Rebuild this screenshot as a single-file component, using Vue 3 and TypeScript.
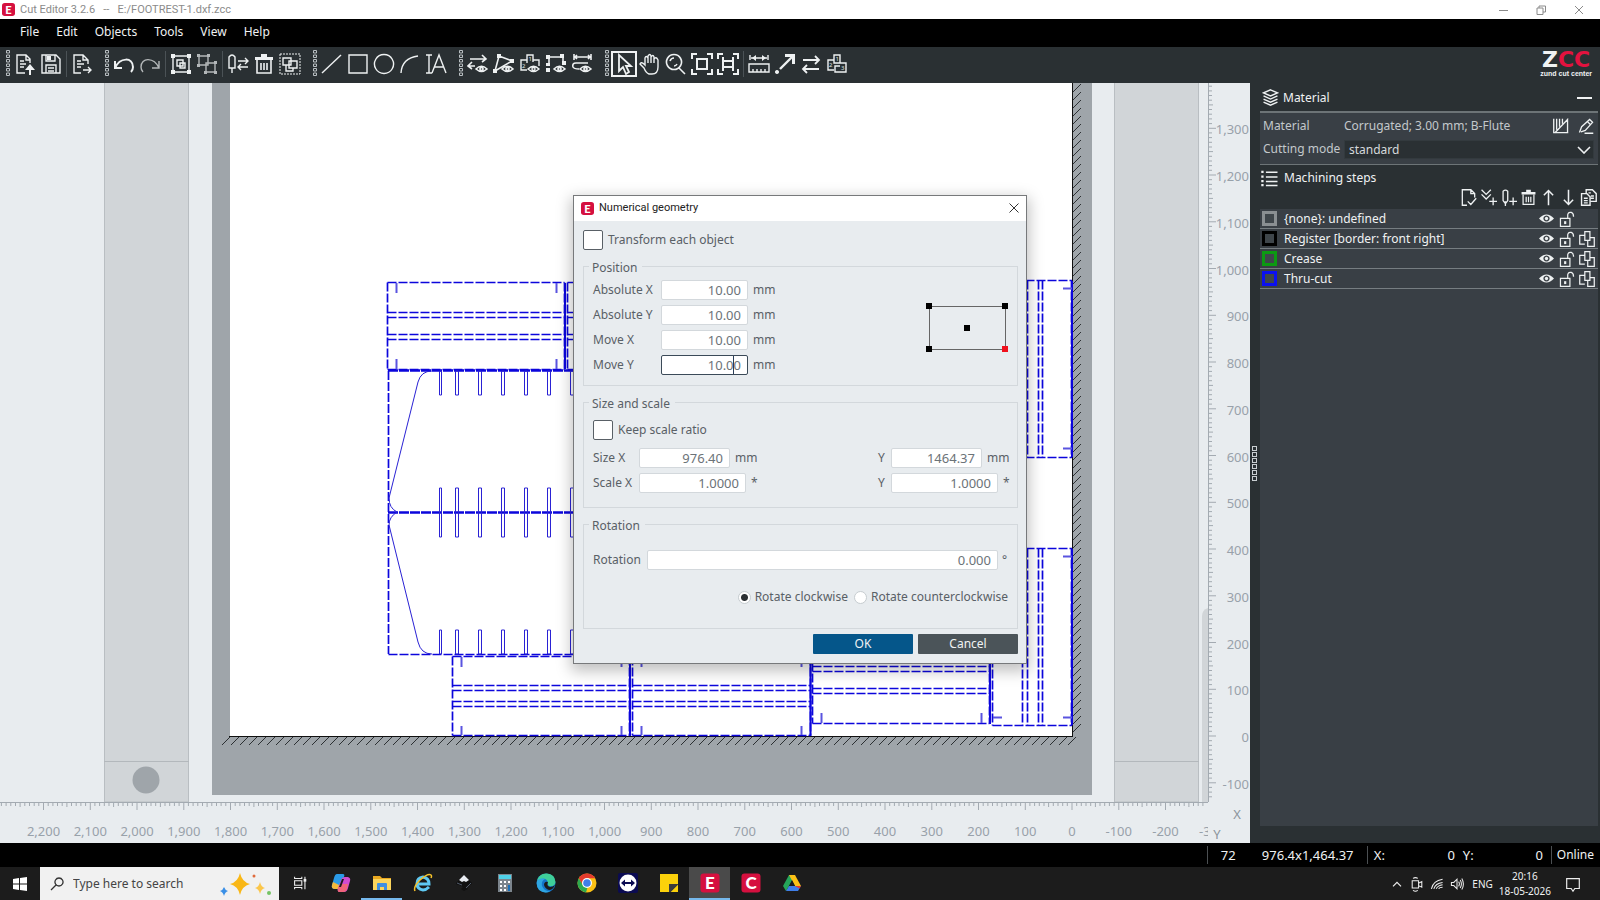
<script setup lang="ts">
import { ref } from 'vue'

interface Icon {
  s?: string
  f?: string
  w?: number
  dash?: string
  t?: [number, number, string][]
}

const eye = 'M9 16 Q14.500 10.500 20 16 Q14.500 21 9 16Z'
const eyeDot = 'M14.500 14.500a1.500 1.500 0 1 0 .01 0Z'
const boxes = 'M8 2H14V10H8Z M8 7H2V17H8M14 10H20V19H9V13H14'

const icons: Record<string, Icon> = {
  open: { s: 'M11 20H3V2H12L16 6V10 M12 2V7H16 M6 8H10 M6 11H12 M6 14H10', f: 'M16 11 L21 17H17V22H15V17H11Z' },
  save: { s: 'M2 2H16L20 6V20H2Z M6 2V8H15V2 M6 20V12H16V20 M8 15H14 M8 18H14', f: 'M7 3H11V7H7Z' },
  exportFile: { s: 'M17 11V7L12 2H3V20H10 M12 2V7H17 M6 8H10 M6 11H13 M6 14H10 M12 17H20 M17 14L20 17L17 20' },
  undo: { s: 'M2 8V15H9 M2 15C7 4 20 4 20 14C20 17 19 18 18 19', w: 2 },
  redo: { s: 'M20 8V15H13 M20 15C15 4 2 4 2 14C2 17 3 18 4 19' },
  group: { s: 'M3 3H19V19H3Z M7 7H13V13H7Z M10 10H15V15H10Z', f: 'M1 1H5V5H1Z M17 1H21V5H17Z M1 17H5V21H1Z M17 17H21V21H17Z' },
  ungroup: { s: 'M3 3H12V12H3Z M10 10H19V19H10Z', f: 'M1 1H4V4H1Z M11 1H14V4H11Z M1 11H4V14H1Z M8 18H11V21H8Z M18 18H21V21H18Z M18 8H21V11H18Z' },
  toolSwap: { s: 'M2 4Q5 0 8 4V15H2Z M5 15V20 M11 8H21 M18 5L21 8L18 11 M21 14H11 M14 11L11 14L14 17' },
  trash: { s: 'M4 7V20H18V7 M8 10V17 M11 10V17 M14 10V17', f: 'M2 4H20V7H2Z M8 1H14V4H8Z', w: 1.6 },
  duplicate: { s: 'M4 5H12V12H4Z M10 8H18V15H10Z M7 12V18H14V15', dash: 'M1 1H21V21H1Z' },
  line: { s: 'M1 20L20 2' },
  rect: { s: 'M2 2H20V20H2Z' },
  circle: { s: 'M11 1.500a9.500 9.500 0 1 0 .01 0Z' },
  arc: { s: 'M2 20Q3 5 19 3' },
  text: { s: 'M1 2H7 M4 2V20 M1 20H7 M7 20L14 2L21 20 M9.500 14H18.500' },
  swapEye: { s: 'M3 6H19 M15 2L19 6L15 9 M8 13H1 M5 9L1 13L5 16 ' + eye + eyeDot, w: 1.6 },
  shapeEye: { s: 'M2 18L6 3L19 8L2 18 ' + eye + eyeDot, f: 'M0 16H4V20H0Z M4 1H8V5H4Z M17 6H21V10H17Z', w: 1.6 },
  orderEye: { s: 'M8 10V2H14V9 M8 7H2V17H8 M14 7H20V13 ' + eye + eyeDot, t: [[9.5, 8, '1'], [3, 15, '2']] },
  pathEye: { s: 'M4 13V4H18V11 ' + eye + eyeDot, f: 'M1 2H5V6H1Z M15 1H19V5H15Z M1 15H5V19H1Z M17 8H21V12H17Z M1 10H5V13H1Z', w: 1.6 },
  measureEye: { s: 'M3 1V7 M20 1V7 M4 4H19 M6 2L4 4L6 6 M17 2L19 4L17 6 M17 10H5Q1 10 2 14Q3 16 8 16 ' + eye + eyeDot, w: 1.6 },
  cursor: { s: 'M6 2V18L10 14L13 21L16 19L13 13H18Z', w: 1.8 },
  hand: { s: 'M5 15L1 11Q2 8 6 12V5Q7 2 9 5V10V3Q11 0 12 3V10V4Q14 1 15 4V10V6Q17 3 19 7V14Q19 21 13 21H10Q7 20 5 15Z' },
  zoom: { s: 'M9 1.500a7.500 7.500 0 1 0 .01 0Z M14 15L20 21 M5 8Q6 5 9 5 M12 11Q11 13 9 13', w: 1.6 },
  fit: { s: 'M6 1H1V6 M16 1H21V6 M6 21H1V16 M16 21H21V16 M6 6H16V16H6Z', w: 2 },
  fitWidth: { s: 'M6 1H1V6 M16 1H21V6 M6 21H1V16 M16 21H21V16 M6 4V18 M16 4V18 M6 8H16 M6 14H16', w: 2 },
  ruler: { s: 'M1 11H21V19H1Z M5 19V16 M9 19V16 M13 19V16 M17 19V16 M2 2V7 M20 2V7 M3 5H19', f: 'M4 5L8 2V8Z M18 5L14 2V8Z' },
  arrowUp: { s: 'M6 16L18 4', f: 'M11 1H21V11H18V4H11Z M3 17a2 2 0 1 0 .01 0Z', w: 2.4 },
  swap: { s: 'M3 7H19 M15 3L19 7L15 11 M19 16H3 M7 12L3 16L7 20', w: 1.8 },
  order: { s: boxes, t: [[9.5, 8, '1'], [3, 14, '2'], [15, 17, '3']] },
  layers: { s: 'M11 1L20 5L11 9L2 5Z M2 9L11 13L20 9 M2 13L11 17L20 13 M2 17L11 21L20 17', w: 1.8 },
  list: { s: 'M7 3H22 M7 9H22 M7 15H22 M7 20H22', f: 'M1 1H4V4H1Z M1 7H4V10H1Z M1 13H4V16H1Z M1 18H4V21H1Z', w: 2 },
  flute: { s: 'M1 1V20H21 M5 1V16 M9 1V12 M13 1V8 M20 20V2L3 20', w: 1.8 },
  pencil: { s: 'M2 20L5 12L16 2L20 6L10 17L4 19 M13 5L17 9 M9 21H21', w: 1.8 },
  docCheck: { s: 'M9 21H3V1H14L19 6V11 M14 1V6H19 M10 16L14 20L21 12', w: 1.7 },
  chevPlus: { s: 'M2 1L8 7L14 1 M2 7L8 13L14 7 M17 11V21 M12 16H22', w: 1.7 },
  toolPlus: { s: 'M4 3Q7 0 10 3V15L7 19L4 15Z M7 16V22 M17 11V21 M12 16H22', w: 1.7 },
  up: { s: 'M11 21V2 M5 8L11 2L17 8', w: 2 },
  down: { s: 'M11 1V20 M5 14L11 20L17 14', w: 2 },
  copyDocs: { s: 'M8 6V1H16L21 6V16H14 M2 6H9L13 10V21H2Z M5 12H10 M5 15H10 M5 18H10 M11 5H14 M14 9H18 M14 12H18', w: 1.8 },
  visible: { f: 'M0 11Q11 -1 22 11Q11 23 0 11Z M11 6.500a4.500 4.500 0 1 0 .01 0Z M11 8.500a2.500 2.500 0 1 1 -.01 0Z' },
  unlocked: { s: 'M2 10H15V21H2Z M12 10V5Q13 1 17 2Q20 3 20 8', f: 'M7 14H10V18H7Z', w: 1.7 },
  linked: { s: 'M8 1H15V13H8Z M8 6H1V18H8 M15 9H21V21H12V13', w: 1.7 },
}

type Tool = { kind: 'grip' | 'sep' } | { kind: 'btn'; icon: string; title: string; on?: boolean; dim?: boolean }
const b = (icon: string, title: string, extra: { on?: boolean; dim?: boolean } = {}): Tool => ({ kind: 'btn', icon, title, ...extra })
const grip: Tool = { kind: 'grip' }
const sep: Tool = { kind: 'sep' }

const tools: Tool[] = [
  grip, b('open', 'Open'), b('save', 'Save'), sep, b('exportFile', 'Export'),
  grip, b('undo', 'Undo'), b('redo', 'Redo', { dim: true }), sep, b('group', 'Group'), b('ungroup', 'Ungroup', { dim: true }), sep,
  b('toolSwap', 'Assign tool'), b('trash', 'Delete'), b('duplicate', 'Duplicate'),
  grip, b('line', 'Line'), b('rect', 'Rectangle'), b('circle', 'Circle'), b('arc', 'Arc'), b('text', 'Text'),
  grip, b('swapEye', 'Show direction'), b('shapeEye', 'Show open shapes'), b('orderEye', 'Show order'), b('pathEye', 'Show points'), b('measureEye', 'Show overcut'),
  grip, b('cursor', 'Select', { on: true }), b('hand', 'Pan'), b('zoom', 'Zoom'), b('fit', 'Fit all'), b('fitWidth', 'Fit material'), sep,
  b('ruler', 'Measure'), b('arrowUp', 'Start point'), b('swap', 'Reverse'), b('order', 'Order'),
]

const menus = ['File', 'Edit', 'Objects', 'Tools', 'View', 'Help']
const stepTools: [string, string][] = [
  ['docCheck', 'Check'], ['chevPlus', 'Add step'], ['toolPlus', 'Add tool'], ['trash', 'Delete step'],
  ['up', 'Move up'], ['down', 'Move down'], ['copyDocs', 'Copy steps'],
]
const steps = [
  { name: '{none}: undefined', tone: 'gray', linked: false },
  { name: 'Register [border: front right]', tone: 'black', linked: true },
  { name: 'Crease', tone: 'green', linked: true },
  { name: 'Thru-cut', tone: 'blue', linked: true },
]

// Workspace geometry
const originX = 1072
const originY = 736
const per100 = 46.75
const fmt = (n: number) => n.toLocaleString('en-US')
const range = (from: number, to: number) => Array.from({ length: to - from + 1 }, (_, i) => from + i)

const xLabels = range(-3, 22).map(i => ({ x: originX - i * per100, text: fmt(i * 100) }))
const yLabels = range(-1, 13).map(i => ({ y: originY - i * per100, text: fmt(i * 100) }))
const tick = (i: number) => (i % 10 === 0 ? 8 : i % 5 === 0 ? 5 : 4)
const xTicks = range(-28, 229).map(i => `M${(originX - i * per100 / 10).toFixed(1)} 802v${tick(i)}`).join('')
const yTicks = range(-13, 139).map(i => `M1208 ${(originY - i * per100 / 10).toFixed(1)}h${tick(i)}`).join('')
const hatchX = range(0, 94).map(i => `M${222 + i * 9} 745l8 -8`).join('')
const hatchY = range(0, 80).map(i => `M1073 ${92 + i * 8}l8 -8`).join('')

const slotXs = [455, 478, 501, 524, 547, 570]
const slots = [[371, 24], [488, 49], [630, 24]]
  .map(([y, h]) => `M439.500 ${y}h2v${h}h-2Z` + slotXs.map(x => `M${x + 0.5} ${y}h3v${h}h-3Z`).join('')).join('')

const panel = (x: number, y: number, w: number, h: number, rows: number[]) =>
  `M${x} ${y}h${w}M${x} ${y + h}h${w}M${x} ${y}v${h}M${x + w} ${y}v${h}` + rows.map(r => `M${x} ${r}h${w}`).join('')
const cuts = [
  panel(387.5, 282.5, 177, 87, [312.5, 317.5, 334.5, 339.5]),
  panel(567.5, 282.5, 177, 87, [312.5, 317.5, 334.5, 339.5]),
  panel(452.5, 656.5, 177, 79, [685.5, 690.5, 701.5, 706.5]),
  panel(632.5, 656.5, 178, 79, [685.5, 690.5, 701.5, 706.5]),
  panel(812.5, 640.5, 177, 83, [666.5, 671.5, 688.5, 693.5]),
  'M992.500 548.500H1072M992.500 725.500H1072M992.500 548.500V725.500M1071.500 548.500V725.500M1022.500 548.500V725.500M1027.500 548.500V725.500M1038.500 548.500V725.500M1042.500 548.500V725.500',
  'M992.500 280.500H1072M992.500 457.500H1072M1071.500 280.500V457.500M1038.500 280.500V457.500M1042.500 280.500V457.500M1027.500 280.500V457.500',
  'M388.500 371V654M388.500 654.500H600',
].join('')
const notch = [
  'M396.500 283v10M556.500 283v10M396.500 359v10M556.500 359v10',
  'M461.500 657v10M621.500 657v10M641.500 657v10M461.500 726v9M621.500 726v9M641.500 726v9M801.500 726v9M801.500 657v10',
  'M821.500 713v10M981.500 713v10M993 717.500h9M1063 717.500h9M1063 556.500h9M1063 288.500h9M1063 448.500h9',
].join('')

const eachObject = ref(false)
const keepRatio = ref(false)
const direction = ref('cw')
const rotation = ref('0.000')
const position = ref([
  { id: 'absx', label: 'Absolute X', value: '10.00', focus: false },
  { id: 'absy', label: 'Absolute Y', value: '10.00', focus: false },
  { id: 'movx', label: 'Move X', value: '10.00', focus: false },
  { id: 'movy', label: 'Move Y', value: '10.00', focus: true },
])
const sizes = ref([
  { id: 'size', label: 'Size X', x: '976.40', y: '1464.37', unit: 'mm' },
  { id: 'scale', label: 'Scale X', x: '1.0000', y: '1.0000', unit: '*' },
])
const apps = ['taskview', 'copilot', 'explorer', 'ie', 'inkscape', 'calc', 'edge', 'chrome', 'teamviewer', 'notes', 'editor', 'center', 'drive']
</script>

<template>
  <div class="screen">
    <header class="titlebar">
      <svg class="mark" viewBox="0 0 14 14"><rect width="14" height="14" rx="3" fill="#d5103f" /><text x="7" y="11.500" class="mark-letter">E</text></svg>
      <span class="caption">Cut Editor 3.2.6&nbsp; &nbsp;--&nbsp; &nbsp;E:/FOOTREST-1.dxf.zcc</span>
      <div class="winbtns">
        <button aria-label="Minimize"><svg viewBox="0 0 10 10"><path d="M1 5.500H10" /></svg></button>
        <button aria-label="Restore"><svg viewBox="0 0 10 10"><path d="M1 3H7V9.500H1Z M3 3V1H9.500V7H7" /></svg></button>
        <button aria-label="Close"><svg viewBox="0 0 10 10"><path d="M1 1L9 9M9 1L1 9" /></svg></button>
      </div>
    </header>

    <nav class="menubar">
      <button v-for="m in menus" :key="m">{{ m }}</button>
    </nav>

    <div class="toolbar">
      <template v-for="(t, i) in tools" :key="i">
        <span v-if="t.kind === 'grip'" class="grip"><svg viewBox="0 0 4 28"><path d="M.5 .5h3v2.500h-3ZM.5 5h3v2.500h-3ZM.5 9.500h3v2.500h-3ZM.5 14h3v2.500h-3ZM.5 18.500h3v2.500h-3ZM.5 23h3v2.500h-3Z" /></svg></span>
        <span v-else-if="t.kind === 'sep'" class="sep"></span>
        <button v-else class="tool" :class="{ on: t.on, dim: t.dim }" :aria-label="t.title">
          <svg viewBox="0 0 22 22">
            <path v-if="icons[t.icon].dash" :d="icons[t.icon].dash" class="st dotted" />
            <path v-if="icons[t.icon].s" :d="icons[t.icon].s" class="st" :stroke-width="icons[t.icon].w ?? 1.4" />
            <path v-if="icons[t.icon].f" :d="icons[t.icon].f" class="fl" />
            <text v-for="n in icons[t.icon].t" :key="n[2]" :x="n[0]" :y="n[1]" class="num">{{ n[2] }}</text>
          </svg>
        </button>
      </template>
      <div class="zcc">
        <div class="zcc-big">Z<b>CC</b></div>
        <div class="zcc-small">zund cut center</div>
      </div>
    </div>

    <main class="work">
      <section class="canvas">
        <svg viewBox="0 83 1250 760" preserveAspectRatio="xMinYMin slice">
          <rect x="0" y="83" width="1250" height="760" fill="#e8ecef" />
          <rect x="104.500" y="80" width="84" height="722" class="band" />
          <path d="M104 761.500H189" class="bandline" />
          <circle cx="146" cy="780" r="13.500" fill="#9fa5aa" />
          <rect x="1114.500" y="80" width="84" height="722" class="band" />
          <path d="M1114 761.500H1199" class="bandline" />
          <rect x="212" y="80" width="880" height="715" fill="#9fa5aa" />
          <rect x="230" y="80" width="842" height="656" fill="#fff" />
          <path d="M229 736.500H1073M1072.500 83V737" stroke="#111" />
          <path :d="hatchX + hatchY" stroke="#2c3033" />
          <path d="M1202 802V616Q1202 610 1208 608V802Z" fill="#d1d5d8" />

          <g fill="none" stroke="#0c06dc">
            <path :d="cuts" stroke-width="1.700" stroke-dasharray="9 2" />
            <path d="M388 370.500H600M388 512.500H600" stroke-width="2.500" stroke-dasharray="10 1" />
            <path d="M565 283V369M630 657V736M810.500 657V736M990 660V724M1072 281V457M1072 549V725" stroke-width="2" />
            <path :d="notch" stroke-width="2" stroke="#5a54e0" />
            <path :d="slots" stroke="#2a22d4" />
            <path d="M432 371Q421 371 418 382L389 498Q389 508 397 512Q389 517 389 525L418 642Q421 654 432 654" stroke="#2a22d4" />
          </g>

          <path d="M0 802.500H1208M1208.500 83V802" stroke="#a3aab1" />
          <path :d="xTicks + yTicks" stroke="#a3aab1" />
          <text v-for="l in xLabels" :key="'x' + l.text" :x="l.x" y="836" class="rule mid">{{ l.text }}</text>
          <text v-for="l in yLabels" :key="'y' + l.text" x="1249" :y="l.y + 6" class="rule end">{{ l.text }}</text>
          <rect x="1208" y="803" width="42" height="40" fill="#e8ecef" />
          <text x="1237" y="819" class="rule mid axis">X</text>
          <text x="1217" y="839" class="rule mid axis">Y</text>
        </svg>
      </section>

      <div class="splitter"><i v-for="n in 6" :key="n"></i></div>

      <aside class="side">
        <div class="head">
          <svg viewBox="0 0 22 22"><path :d="icons.layers.s" class="st" stroke-width="1.800" /></svg>
          <h2>Material</h2>
          <button class="collapse" aria-label="Collapse"></button>
        </div>
        <div class="material">
          <div class="mrow">
            <span class="mlabel">Material</span><span class="mvalue">Corrugated; 3.00 mm; B-Flute</span>
            <button v-for="n in ['flute', 'pencil']" :key="n" class="mini" :aria-label="n">
              <svg viewBox="0 0 22 22"><path :d="icons[n].s" class="st" stroke-width="1.800" /></svg>
            </button>
          </div>
          <div class="mrow">
            <label class="mlabel" for="mode">Cutting mode</label>
            <div class="selwrap">
              <select id="mode"><option>standard</option></select>
              <svg viewBox="0 0 14 8"><path d="M1 1L7 7L13 1" class="st" stroke-width="1.600" /></svg>
            </div>
          </div>
        </div>
        <div class="head second">
          <svg viewBox="0 0 22 22"><path :d="icons.list.s" class="st" stroke-width="2" /><path :d="icons.list.f" class="fl" /></svg>
          <h2>Machining steps</h2>
        </div>
        <div class="steptools">
          <button v-for="s in stepTools" :key="s[0]" :aria-label="s[1]">
            <svg viewBox="0 0 22 22"><path :d="icons[s[0]].s" class="st" :stroke-width="icons[s[0]].w" /><path v-if="icons[s[0]].f" :d="icons[s[0]].f" class="fl" /></svg>
          </button>
        </div>
        <ul class="steps">
          <li v-for="s in steps" :key="s.name">
            <i class="swatch" :class="s.tone"></i>
            <span>{{ s.name }}</span>
            <button aria-label="Visible"><svg class="eye" viewBox="0 0 22 22"><path :d="icons.visible.f" fill-rule="evenodd" class="fl" /></svg></button>
            <button aria-label="Unlocked"><svg viewBox="0 0 22 22"><path :d="icons.unlocked.s" class="st" stroke-width="1.700" /><path :d="icons.unlocked.f" class="fl" /></svg></button>
            <button aria-label="Linked"><svg v-if="s.linked" viewBox="0 0 22 22"><path :d="icons.linked.s" class="st" stroke-width="1.700" /></svg></button>
          </li>
        </ul>
      </aside>
    </main>

    <footer class="status">
      <span class="c1">72</span><span class="c2">976.4x1,464.37</span>
      <span class="c3"><span>X:</span><span>0</span></span><span class="c4"><span>Y:</span><span>0</span></span>
      <span class="c5">Online</span>
    </footer>

    <div class="taskbar">
      <button class="start" aria-label="Start"><svg viewBox="0 0 14 14"><path d="M0 2L6 1V6.500H0ZM7 1L14 0V6.500H7ZM0 7.500H6V13L0 12ZM7 7.500H14V14L7 13Z" fill="#fff" /></svg></button>
      <label class="search">
        <svg class="glass" viewBox="0 0 14 14"><path d="M9 1a4 4 0 1 1-.01 0ZM6 8L1 13" /></svg>
        <input type="text" placeholder="Type here to search" aria-label="Search" />
        <svg class="sparkles" viewBox="0 0 54 24">
          <path d="M21 1Q23 10 31 12Q23 14 21 23Q19 14 11 12Q19 10 21 1Z" fill="#f9b716" />
          <path d="M41 10Q42 15 46 16Q42 17 41 22Q40 17 36 16Q40 15 41 10Z" fill="#fbc64a" />
          <path d="M5 15Q6 18 9 19Q6 20 5 24Q4 20 1 19Q4 18 5 15Z" fill="#3a8fe6" />
          <circle cx="35" cy="4" r="1.500" fill="#e06b3c" /><circle cx="50" cy="21" r="2" fill="#74c365" />
        </svg>
      </label>
      <button v-for="a in apps" :key="a" class="app" :class="a" :aria-label="a">
        <svg viewBox="0 0 20 20">
          <g v-if="a === 'taskview'" fill="none" stroke="#eee" stroke-width="1.200"><path d="M4 3V5H12V3M4 17V15H12V17M4 7.500H12V12.500H4ZM15.500 3V17" /><path d="M14 7H17" stroke-width="3" /></g>
          <g v-else-if="a === 'copilot'">
            <path d="M6 1H12Q14 1 13 4L10 13Q9 16 6 16H3Q0 15 1 12L3 5Q4 1 6 1Z" fill="#2a9be8" /><path d="M2 9L1 12Q0 16 4 16H6Q9 16 10 13Z" fill="#f5b93a" />
            <path d="M14 4H17Q20 5 19 8L17 15Q16 19 13 19H8Q6 18 7 15L10 7Q11 4 14 4Z" fill="#d14bd0" /><path d="M7 15L9 11H17L16 16Q15 19 12 19H8Q6 18 7 15Z" fill="#f0647a" /><path d="M11 6L13 6L10 14L8 14Z" fill="#1c1c1c" />
          </g>
          <g v-else-if="a === 'explorer'"><path d="M1 3H8L10 5H19V17H1Z" fill="#e9a820" /><path d="M1 6H19V17H1Z" fill="#fbd55c" /><path d="M5 17V11Q5 10 6 10H14Q15 10 15 11V17H12V14H8V17Z" fill="#3f8fe0" /></g>
          <g v-else-if="a === 'ie'" fill="none"><path d="M16 14Q13 17 10 17Q4 16 4 10.500Q4 5 10 4Q16 5 16 11H5" stroke="#5fc9f3" stroke-width="3" /><path d="M2 18Q0 14 7 7Q15 0 18 2Q19 3 18 5" stroke="#f5c22b" stroke-width="1.500" /></g>
          <g v-else-if="a === 'inkscape'"><path d="M10 2L18 10Q18 12 14 12L12 14L14 16L10 18L7 16L9 14L5 12Q2 12 2 10Z" fill="#111" /><path d="M10 2L15 7L12 9L10 8L8 9L5 7Z" fill="#e8ecf2" /><path d="M3 10L8 12M12 15L17 10" stroke="#525c6c" /></g>
          <g v-else-if="a === 'calc'"><path d="M3 1H17V19H3Z" fill="#7c858d" /><path d="M4 2H16V6H4Z" fill="#4fd1e8" /><path d="M5 8H7V10H5ZM9 8H11V10H9ZM13 8H15V10H13ZM5 12H7V14H5ZM9 12H11V14H9ZM5 16H7V18H5ZM9 16H11V18H9Z" fill="#fff" /><path d="M13 12H15V18H13Z" fill="#1a6fb8" /></g>
          <g v-else-if="a === 'edge'"><circle cx="10" cy="10" r="9.500" fill="#1475c9" /><path d="M1 8Q3 0 11 .5Q19 1 19.500 9Q19 14 13 13Q11 12 12 10Q11 5 6 6Q3 6 1 8Z" fill="#3fcf9a" /><path d="M1 8Q5 4 9 6Q5 8 6 13Q8 18 14 18.500Q8 21 3 17Q0 13 1 8Z" fill="#2fa6e2" /><path d="M12 9Q10 13 14 14Q17 14 19 12Q17 17 13 17Q8 15 8 11Q9 8 12 9Z" fill="#1c1c1c" /></g>
          <g v-else-if="a === 'chrome'"><circle cx="10" cy="10" r="9.500" fill="#fbc116" /><path d="M10 .5A9.500 9.500 0 0 1 18.300 5.300H10L5.500 12L1.700 5.300A9.500 9.500 0 0 1 10 .5Z" fill="#e33b2e" /><path d="M1.700 5.300L6 12.500L10.500 14.500L9 19.450A9.500 9.500 0 0 1 1.700 5.300Z" fill="#2da94f" /><circle cx="10" cy="10" r="5" fill="#fff" /><circle cx="10" cy="10" r="3.800" fill="#3f7ee8" /></g>
          <g v-else-if="a === 'teamviewer'"><rect width="20" height="20" rx="2" fill="#0b0b52" /><circle cx="10" cy="10" r="8.500" fill="#fff" /><path d="M3 10L7 6.500V9H13V6.500L17 10L13 13.500V11H7V13.500Z" fill="#0b0b52" /></g>
          <g v-else-if="a === 'notes'"><path d="M1 1H19V19H1Z" fill="#fbd10b" /><path d="M10 11H19V12L12 19H10Z" fill="#3b3b3b" /><path d="M12 19L19 12V19Z" fill="#fbd10b" /></g>
          <g v-else-if="a === 'editor' || a === 'center'"><rect x=".5" y=".5" width="19" height="19" rx="3" fill="#d5103f" /><text x="10" y="16" class="app-letter">{{ a === 'editor' ? 'E' : 'C' }}</text></g>
          <g v-else><path d="M7 2H13L10 8L4 18L1 13Z" fill="#25a55a" /><path d="M7 2H13L19 13H13Z" fill="#fbc116" /><path d="M4 18L7 13H19L16 18Z" fill="#3f7ee8" /><path d="M10 7L13 13H7Z" fill="#1c1c1c" /><path d="M13 13H19L17.500 15.500Z" fill="#e33b2e" /></g>
        </svg>
      </button>
      <div class="tray">
        <svg viewBox="0 0 20 20"><path d="M5 13L10 8L15 13" stroke-width="1.500" /></svg>
        <svg viewBox="0 0 20 20"><path d="M4 6H12V15H4ZM12 9L16 7V14L12 12M5 3Q8 1 11 3M5 18Q8 20 11 18" /></svg>
        <svg viewBox="0 0 20 20"><path d="M3 16Q5 6 17 4M6 16Q8 9 17 8M9 16Q11 12 17 11M12 16Q13 14 17 14" /></svg>
        <svg viewBox="0 0 20 20"><path d="M3 8H6L10 4V16L6 12H3ZM12 7Q14 10 12 13M14 5Q17 10 14 15M16 3Q20 10 16 17" /></svg>
        <span class="lang">ENG</span>
        <span class="clock"><span>20:16</span><span>18-05-2026</span></span>
        <svg class="bell" viewBox="0 0 20 20"><path d="M3 4H17V15H12L10 18L8 15H3Z" /></svg>
      </div>
    </div>

    <form class="dialog" role="dialog" aria-label="Numerical geometry" @submit.prevent>
      <div class="dtitle">
        <svg class="mark" viewBox="0 0 14 14"><rect width="14" height="14" rx="3" fill="#d5103f" /><text x="7" y="11.500" class="mark-letter">E</text></svg>
        <span>Numerical geometry</span>
        <button type="button" aria-label="Close"><svg viewBox="0 0 10 10"><path d="M.5 .5L9.500 9.500M9.500 .5L.5 9.500" /></svg></button>
      </div>
      <div class="dbody">
        <label class="check"><input v-model="eachObject" type="checkbox" />Transform each object</label>

        <fieldset class="fpos">
          <legend>Position</legend>
          <div class="posrows">
            <div class="rows">
              <div v-for="p in position" :key="p.id" class="row">
                <label :for="p.id">{{ p.label }}</label>
                <span class="field"><input :id="p.id" v-model="p.value" type="text" :class="{ focus: p.focus }" /><i v-if="p.focus" class="caret"></i></span>
                <span class="unit">mm</span>
              </div>
            </div>
            <svg class="anchor" viewBox="0 0 82 50">
              <path d="M3.500 3.500H79.500V46.500H3.500Z" fill="none" stroke="#666" />
              <path d="M0 0h6v6h-6ZM76 0h6v6h-6ZM0 43h6v6h-6ZM38 22h6v6h-6Z" fill="#000" />
              <path d="M76 43h6v6h-6Z" fill="#f0101c" />
            </svg>
          </div>
        </fieldset>

        <fieldset class="fsize">
          <legend>Size and scale</legend>
          <label class="check"><input v-model="keepRatio" type="checkbox" />Keep scale ratio</label>
          <div v-for="s in sizes" :key="s.id" class="row" :class="s.id">
            <label :for="s.id + 'x'">{{ s.label }}</label>
            <span class="cell"><input :id="s.id + 'x'" v-model="s.x" type="text" /><span class="unit">{{ s.unit }}</span></span>
            <label class="ylab" :for="s.id + 'y'">Y</label>
            <span class="cell"><input :id="s.id + 'y'" v-model="s.y" type="text" /><span class="unit">{{ s.unit }}</span></span>
          </div>
        </fieldset>

        <fieldset class="frot">
          <legend>Rotation</legend>
          <div class="row">
            <label for="rot">Rotation</label><input id="rot" v-model="rotation" type="text" /><span class="unit">°</span>
          </div>
          <div class="radios">
            <label><input v-model="direction" type="radio" name="dir" value="cw" />Rotate clockwise</label>
            <label><input v-model="direction" type="radio" name="dir" value="ccw" />Rotate counterclockwise</label>
          </div>
        </fieldset>

        <div class="actions">
          <button type="submit" class="ok">OK</button>
          <button type="button">Cancel</button>
        </div>
      </div>
    </form>
  </div>
</template>

<style>
body { margin: 0; overflow: hidden; }
</style>

<style scoped>
* { box-sizing: border-box; }
.screen { position: relative; display: flex; flex-direction: column; height: 100vh; overflow: hidden; background: #000; color: #f0f2f3; font: 12px/18px "Noto Sans", "Open Sans", sans-serif; }
button { padding: 0; border: 0; background: none; color: inherit; font: inherit; }
input, select { font: inherit; }
h2 { margin: 0; font: inherit; }
svg { display: block; }
.st { fill: none; stroke: #eef1f2; }
.fl { fill: #eef1f2; }

.titlebar { display: flex; align-items: center; height: 19px; flex: none; background: #fff; color: #8b8b8b; font: 11px/18px Roboto, sans-serif; }
.mark { width: 13px; height: 13px; margin: 0 5px 0 2px; }
.mark-letter, .app-letter { fill: #fff; font-family: Lato, sans-serif; font-weight: 900; text-anchor: middle; }
.mark-letter { font-size: 12px; }
.app-letter { font-size: 17px; }
.winbtns { display: flex; margin-left: auto; padding-right: 2px; }
.winbtns button { display: flex; justify-content: center; width: 38px; }
.winbtns svg { width: 10px; height: 10px; fill: none; stroke: #8a8a8a; }

.menubar { display: flex; align-items: center; gap: 17px; height: 28px; flex: none; padding: 0 0 2px 20px; background: #000; }

.toolbar { display: flex; align-items: center; height: 36px; flex: none; padding-bottom: 2px; background: #2a3033; }
.grip { display: flex; justify-content: flex-end; width: 16px; padding-right: 2px; }
.grip:first-child { width: 12px; }
.grip svg { width: 4px; height: 28px; fill: none; stroke: #b9bfc2; stroke-width: 1; }
.sep { width: 1px; height: 26px; margin: 0 2px; background: #4b5256; }
.tool { display: flex; align-items: center; justify-content: center; width: 26px; height: 26px; }
.tool svg { width: 22px; height: 22px; }
.tool.on { border: 2px solid #f0f2f3; }
.tool.dim { opacity: .7; }
.dotted { stroke-dasharray: 2 1; }
.num { fill: #dfe3e5; font-size: 6px; }
.zcc { margin: 0 8px 0 auto; text-align: center; }
.zcc-big { height: 19px; font: bold 22px/19px "DejaVu Sans", sans-serif; }
.zcc-big b { color: #e3123f; }
.zcc-small { height: 9px; font: bold 7px/9px "Liberation Sans", sans-serif; }

.work { display: flex; flex: 1; min-height: 0; background: #2a3033; }
.canvas { flex: 1; min-width: 0; overflow: hidden; }
.canvas svg { width: 100%; height: 100%; }
.band { fill: #d1d5d8; stroke: #b9bec2; }
.bandline { stroke: #b3b8bc; }
.rule { fill: #98a1aa; font-size: 13px; }
.mid { text-anchor: middle; }
.end { text-anchor: end; }
.axis { fill: #8b949c; }
.splitter { display: flex; flex-direction: column; justify-content: center; gap: 1px; width: 10px; padding-left: 2px; flex: none; }
.splitter i { width: 5px; height: 5px; border: 1px solid #c9ced1; }

.side { display: flex; flex-direction: column; width: 340px; flex: none; padding: 2px 2px 17px 0; }
.head { display: flex; align-items: center; height: 26px; padding: 0 0 1px 2px; }
.head svg { width: 17px; height: 17px; margin-right: 4px; }
.head.second { height: 24px; padding: 2px 0 0 0; }
.head.second svg { width: 18px; margin-right: 6px; }
.collapse { width: 15px; height: 2px; margin: 0 6px 0 auto; background: #f0f2f3; }
.material { border: solid #6d7477; border-width: 2px 0 1px; background: #393f45; padding: 2px 4px 3px 3px; color: #c3c8cb; }
.mrow { display: flex; align-items: center; height: 22px; }
.mrow + .mrow { height: 24px; }
.mlabel { width: 81px; white-space: nowrap; }
.mvalue { flex: 1; }
.mini { width: 16px; margin-left: 9px; }
.mini svg { width: 16px; height: 16px; }
.selwrap { position: relative; flex: 1; }
.selwrap select { display: block; width: 100%; height: 19px; padding: 0 4px; border: 1px solid #333a3e; background: #2a3033; color: #d5d9db; appearance: none; line-height: 17px; }
.selwrap svg { position: absolute; right: 3px; top: 6px; width: 14px; height: 8px; }
.steptools { display: flex; justify-content: flex-end; gap: 3px; height: 20px; padding-right: 1px; }
.steptools button { width: 17px; height: 17px; }
.steptools svg { width: 17px; height: 17px; }
.steps { flex: 1; margin: 0; padding: 0; list-style: none; background: #393f45; }
.steps li { display: flex; align-items: center; height: 20px; padding: 0 3px 0 2px; border-bottom: 1px solid #767d81; }
.steps li span { flex: 1; }
.steps svg { width: 16px; height: 16px; }
.steps .eye { width: 15px; height: 15px; }
.steps button { width: 16px; margin-left: 4px; }
.swatch { width: 15px; height: 15px; margin-right: 7px; border: 3px solid #8a8f92; background: #3f464b; }
.swatch.black { border-color: #000; }
.swatch.green { border-color: #0c9a12; }
.swatch.blue { border-color: #0b10f0; }

.status { display: flex; justify-content: flex-end; align-items: center; height: 24px; flex: none; padding-right: 6px; font-size: 13px; }
.status > span { height: 18px; }
.c1 { width: 54px; padding-left: 13px; border-left: 1px solid #4b4f52; }
.c2 { width: 106px; padding-left: 1px; }
.c3 { display: flex; justify-content: space-between; width: 88px; padding-left: 6px; border-left: 1px solid #4b4f52; }
.c4 { display: flex; justify-content: space-between; width: 96px; padding: 0 8px; }
.c5 { padding-left: 5px; border-left: 1px solid #4b4f52; font-size: 12px; }

.taskbar { display: flex; align-items: center; height: 33px; flex: none; background: #1c1c1c; }
.start { display: flex; align-items: center; justify-content: center; width: 40px; height: 33px; }
.start svg { width: 14px; height: 14px; }
.search { display: flex; align-items: center; width: 239px; height: 33px; background: #f1f1f1; padding-left: 10px; }
.glass { width: 14px; height: 14px; fill: none; stroke: #333; stroke-width: 1.3; flex: none; }
.search input { flex: 1; min-width: 0; height: 30px; border: 0; padding: 0 0 0 9px; background: none; font-size: 12px; }
.search input::placeholder { color: #444; opacity: 1; }
.sparkles { width: 54px; height: 24px; margin-right: 6px; flex: none; }
.app { display: flex; align-items: center; justify-content: center; width: 41px; height: 33px; border-bottom: 2px solid transparent; }
.app svg { width: 20px; height: 20px; }
.taskview svg { width: 18px; height: 18px; }
.explorer { border-bottom-color: #76b9ed; }
.editor { background: #4a4a4a; border-bottom-color: #76b9ed; }
.tray { display: flex; align-items: center; margin-left: auto; padding-right: 17px; font-size: 10px; }
.tray svg { width: 16px; height: 16px; margin-right: 4px; fill: none; stroke: #eee; stroke-width: 1.3; }
.lang { margin: 0 6px 0 3px; }
.clock { display: flex; flex-direction: column; align-items: center; line-height: 15px; margin-right: 12px; white-space: nowrap; }
.tray .bell { width: 20px; height: 18px; margin: 0; }

.dialog { position: absolute; left: 573px; top: 195px; width: 454px; border: 1px solid #77797b; background: #e8ecef; color: #596066; box-shadow: 0 5px 14px 2px rgba(0, 0, 0, .25); }
.dtitle { display: flex; align-items: center; height: 25px; padding: 0 0 1px 5px; background: #fff; color: #222; font: 11px/18px Roboto, sans-serif; }
.dtitle button { margin: 0 7px 0 auto; }
.dtitle button svg { width: 10px; height: 10px; stroke: #333; }
.dbody { padding: 9px 8px 9px 9px; }
.check { display: flex; align-items: center; height: 20px; width: max-content; }
.check input { appearance: none; width: 20px; height: 20px; margin: 0 5px 0 0; border: 1px solid #596066; border-radius: 2px; background: #fff; }
.check input:checked { background: #596066; }
fieldset { min-width: 0; margin: 6px 0 0; border: 1px solid #d3d8dc; }
legend { margin-left: -4px; height: 20px; padding: 3px 5px 0 3px; line-height: 17px; }
.fpos { padding: 4px 9px 10px; }
.fsize { padding: 8px 9px 14px; }
.frot { padding: 16px 9px 21px; }
.posrows { display: flex; }
.anchor { width: 82px; height: 50px; margin: 23px 0 0 auto; }
.rows { display: flex; flex-direction: column; gap: 5px; }
.row { display: flex; align-items: center; height: 20px; }
.row input { flex: none; min-width: 0; height: 20px; padding: 0 6px; border: 1px solid #d3d8dc; border-radius: 2px; background: #fff; color: #6c7378; font-size: 13px; text-align: right; }
.field { position: relative; display: flex; width: 87px; }
.field input { width: 100%; }
.row .focus { border-color: #3b4a58; }
.caret { position: absolute; right: 14px; top: 1px; width: 1px; height: 18px; background: #2b3e58; }
.unit { margin-left: 5px; }
.fpos label { width: 68px; }
.fsize label { width: 46px; }
.fsize .check { width: max-content; margin-bottom: 8px; }
.fsize .row + .row { margin-top: 5px; }
.fsize .ylab { width: 13px; margin-left: auto; }
.cell { display: flex; align-items: center; width: 117px; white-space: nowrap; }
.size input { width: 91px; }
.scale input { width: 107px; }
.frot .row label { width: 54px; }
.frot .row input { flex: 1; }
.frot .unit { margin-left: 4px; width: 6px; }
.radios { display: flex; justify-content: flex-end; gap: 6px; margin-top: 17px; height: 20px; }
.radios label { display: flex; align-items: center; }
.radios input { appearance: none; width: 13px; height: 13px; margin: 0 4px 0 0; border: 1px solid #c6ccd0; border-radius: 50%; background: #fff; }
.radios input:checked { background: radial-gradient(circle, #2b3033 3px, #fff 4px); }
.actions { display: flex; justify-content: flex-end; gap: 5px; margin-top: 5px; }
.actions button { width: 100px; height: 20px; border-radius: 1px; background: #4b5459; color: #f0f2f3; line-height: 20px; }
.actions .ok { background: #05568a; }
</style>
